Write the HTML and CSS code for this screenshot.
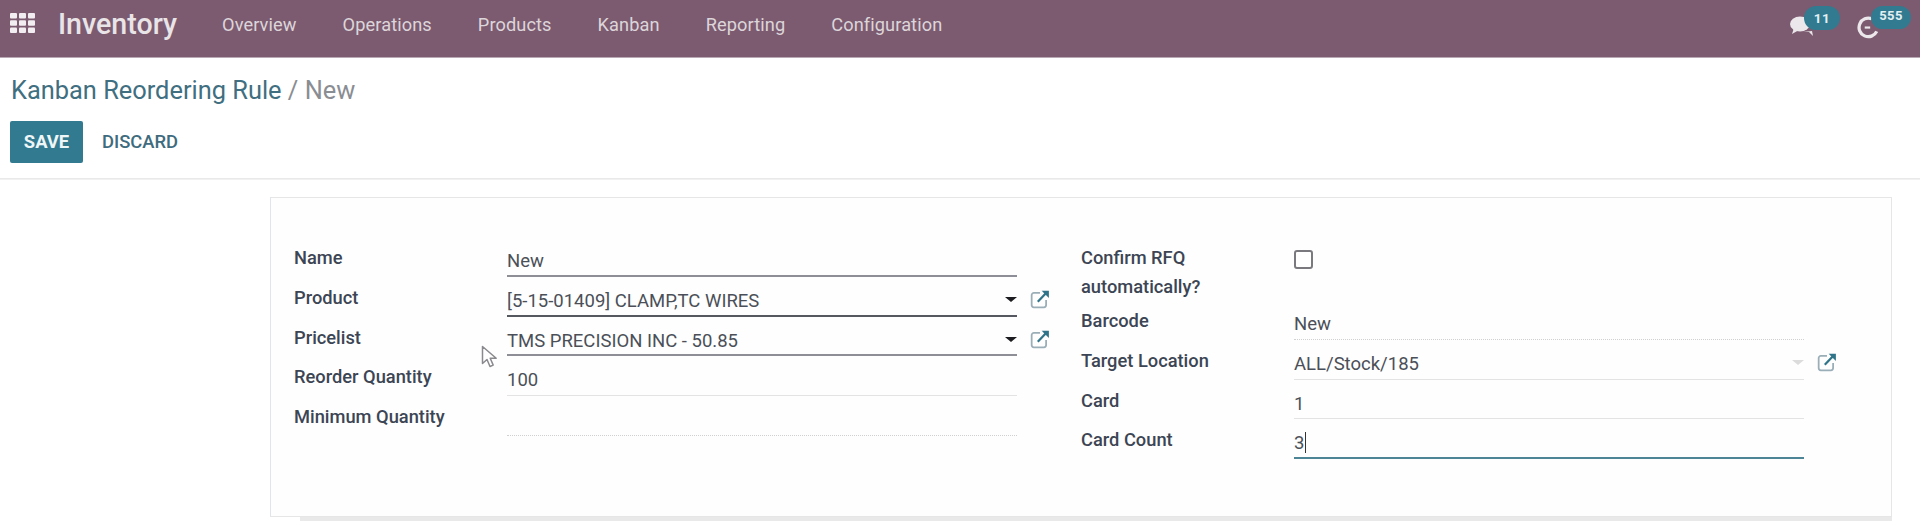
FILE: index.html
```html
<!DOCTYPE html>
<html lang="en">
<head>
<meta charset="utf-8">
<title>Kanban Reordering Rule</title>
<link rel="stylesheet" href="styles.css">
</head>
<body>
<header class="navbar">
  <svg class="apps" width="25" height="20" viewBox="0 0 25 20"><g fill="#f1edf0"><rect x="0" y="0" width="7" height="5.5" rx="1"/><rect x="9" y="0" width="7" height="5.5" rx="1"/><rect x="18" y="0" width="7" height="5.5" rx="1"/><rect x="0" y="7.2" width="7" height="5.5" rx="1"/><rect x="9" y="7.2" width="7" height="5.5" rx="1"/><rect x="18" y="7.2" width="7" height="5.5" rx="1"/><rect x="0" y="14.4" width="7" height="5.5" rx="1"/><rect x="9" y="14.4" width="7" height="5.5" rx="1"/><rect x="18" y="14.4" width="7" height="5.5" rx="1"/></g></svg>
  <span class="brand">Inventory</span>
  <nav class="menu">
    <a>Overview</a><a>Operations</a><a>Products</a><a>Kanban</a><a>Reporting</a><a>Configuration</a>
  </nav>
  <div class="systray">
    <div class="tray-item tray-chat">
      <svg width="24" height="22" viewBox="0 0 24 22"><g fill="#ebe7ea"><ellipse cx="10" cy="9" rx="10" ry="7.5"/><path d="M4 13l-2 6 7-4z"/><path d="M13 17h6l4 4-1-5z"/></g></svg>
      <span class="badge badge-chat">11</span>
    </div>
    <div class="tray-item tray-clock">
      <svg width="24" height="24" viewBox="0 0 22 22"><path d="M14.5 3.5A8.5 8.5 0 1 0 19 15" fill="none" stroke="#ebe7ea" stroke-width="3"/><path d="M8 11.5h5" stroke="#ebe7ea" stroke-width="2"/></svg>
      <span class="badge badge-clock">555</span>
    </div>
  </div>
</header>

<section class="control-panel">
  <h1 class="breadcrumb"><a>Kanban Reordering Rule</a><span class="sep"> / </span><span class="current">New</span></h1>
  <div class="buttons">
    <button class="btn btn-primary">SAVE</button>
    <button class="btn btn-link">DISCARD</button>
  </div>
</section>

<main class="sheet-area">
  <div class="sheet">
    <div class="group group-left">
      <label class="lbl">Name</label>
      <div class="field strong">New</div>
      <span></span>

      <label class="lbl">Product</label>
      <div class="field dark">[5-15-01409] CLAMP,TC WIRES<i class="caret"></i></div>
      <svg class="ext" viewBox="0 0 18 18"><use href="#ext-icon"/></svg>

      <label class="lbl">Pricelist</label>
      <div class="field strong">TMS PRECISION INC - 50.85<i class="caret"></i></div>
      <svg class="ext" viewBox="0 0 18 18"><use href="#ext-icon"/></svg>

      <label class="lbl">Reorder Quantity</label>
      <div class="field">100</div>
      <span></span>

      <label class="lbl">Minimum Quantity</label>
      <div class="field dotted"></div>
      <span></span>
    </div>

    <div class="group group-right">
      <label class="lbl lbl-tall">Confirm RFQ automatically?</label>
      <div class="check-cell"><span class="checkbox"></span></div>
      <span></span>

      <label class="lbl">Barcode</label>
      <div class="field dotted">New</div>
      <span></span>

      <label class="lbl">Target Location</label>
      <div class="field">ALL/Stock/185<i class="caret caret-light"></i></div>
      <svg class="ext" viewBox="0 0 18 18"><use href="#ext-icon"/></svg>

      <label class="lbl">Card</label>
      <div class="field">1</div>
      <span></span>

      <label class="lbl">Card Count</label>
      <div class="field focus">3<i class="text-cursor"></i></div>
      <span></span>
    </div>
  </div>
  <div class="sheet-shadow"></div>
  <svg class="pointer" width="18" height="24" viewBox="0 0 18 24"><path d="M1.5 1.5v17l4.5-4 3 7 3.2-1.4-3-6.8h6z" fill="#fff" stroke="#8a8a8e" stroke-width="1.5" stroke-linejoin="round"/></svg>
</main>

<svg class="defs" width="0" height="0"><defs><symbol id="ext-icon" viewBox="0 0 18 18"><path d="M9 3.5H3.5a2 2 0 0 0-2 2v9a2 2 0 0 0 2 2h9a2 2 0 0 0 2-2V10" fill="none" stroke="#9aaeb8" stroke-width="1.6"/><path d="M7 11.5 14.5 3.5" fill="none" stroke="#2f7488" stroke-width="2"/><path d="M10.5 1.5h6.5V8z" fill="#2f7488"/></symbol></defs></svg>
</body>
</html>
```
FILE: styles.css
```css
* { box-sizing: border-box; }
html, body { margin: 0; height: 527px; overflow: hidden; background: #fff; }
body { font-family: Roboto, "Liberation Sans", sans-serif; color: #4c4c4c; }

.navbar {
  height: 58px;
  background: #7c5b70;
  border-bottom: 1px solid #b9a9b4;
  display: flex;
  align-items: center;
  color: #e6e0e4;
  padding-left: 10px;
}
.apps { flex: none; margin-top: -11px; }
.brand {
  margin-left: 23px;
  font-size: 28.6px;
  font-weight: 500;
  color: #e9e4e7;
  line-height: 1;
  margin-top: -8px;
}
.menu { display: flex; margin-left: 45px; gap: 46px; margin-top: -9px; }
.menu a { font-size: 18.2px; letter-spacing: 0.1px; color: #dcd5da; }

.systray { margin-left: auto; display: flex; padding-right: 32px; }
.tray-item { position: relative; width: 24px; height: 24px; margin-top: -3px; }
.tray-chat { margin-right: 42px; }
.tray-clock { margin-right: 8px; }
.badge {
  position: absolute;
  background: #327a8f;
  color: #e2f0f4;
  font-size: 13.5px;
  font-weight: 700;
  border-radius: 12px;
  text-align: center;
  letter-spacing: 0.4px;
}
.badge-chat { left: 14px; top: -9px; width: 36px; height: 24px; line-height: 24px; }
.badge-clock { left: 15px; top: -9px; width: 40px; height: 23px; line-height: 19px; font-size: 13px; }

.control-panel {
  height: 121px;
  border-bottom: 1px solid #e9e9e9;
  padding: 0 0 0 11px;
  box-shadow: 0 1px 0 #f1f1f1;
}
.breadcrumb {
  margin: 0;
  padding-top: 17px;
  font-size: 25.4px;
  font-weight: 400;
  line-height: 30px;
  color: #3f6f80;
}
.breadcrumb .sep, .breadcrumb .current { color: #8a8d92; }
.buttons { display: flex; margin-top: 16px; margin-left: -1px; align-items: stretch; }
.btn {
  font-family: inherit;
  font-size: 18.4px;
  font-weight: 500;
  height: 42px;
  border: 0;
  padding: 0 0 2px;
  background: none;
}
.btn-primary {
  width: 73px;
  background: #327a8f;
  color: #eef6f8;
  border-radius: 2px;
  font-weight: 700;
}
.btn-link { margin-left: 19px; color: #3e6b7d; }

.sheet-area { position: relative; padding: 18px 28px 0 270px; }
.sheet {
  height: 320px;
  border: 1px solid #e6e6e6;
  border-left-color: #dfe5ea;
  background: #fefefe;
  padding: 39px 0 0 23px;
  display: flex;
}
.sheet-shadow { height: 4px; background: #e9e9ea; margin-left: 30px; }
.group { display: grid; align-content: start; grid-auto-rows: 39.75px; }
.group-left { width: 787px; grid-template-columns: 213px 510px 64px; }
.group-right { grid-template-columns: 213px 510px 40px; grid-template-rows: 63px; }
.lbl {
  font-size: 18.3px;
  font-weight: 500;
  color: #3c4554;
  line-height: 28px;
  padding-top: 7px;
}
.lbl-tall { line-height: 29px; padding-top: 6px; width: 170px; height: 63px; }
.field {
  position: relative;
  font-size: 18.5px;
  line-height: 24px;
  height: 39.75px;
  padding-top: 12px;
  color: #4b5058;
  border-bottom: 1.5px solid #e3e3e3;
}
.strong { border-bottom: 2px solid #8e8e96; }
.dark { border-bottom: 2px solid #55585e; }
.dotted { border-bottom: 1px dotted #d0d0d0; }
.focus { border-bottom: 2px solid #4d8597; }
.caret {
  position: absolute;
  right: 0;
  top: 20px;
  border-left: 6px solid transparent;
  border-right: 6px solid transparent;
  border-top: 5px solid #1c1c20;
}
.caret-light { border-top-color: #dcdcdc; }
.text-cursor { display: inline-block; width: 1px; height: 21px; background: #333; vertical-align: -4px; margin-left: 1px; }
.ext { width: 20px; height: 20px; margin: 12px 0 0 13px; }
.check-cell { padding-top: 13px; }
.checkbox {
  display: block;
  width: 19px;
  height: 19px;
  border: 2px solid #7a7a7e;
  border-radius: 3px;
  background: #fff;
}
.pointer { position: absolute; left: 481px; top: 166px; }
.defs { position: absolute; }
```
